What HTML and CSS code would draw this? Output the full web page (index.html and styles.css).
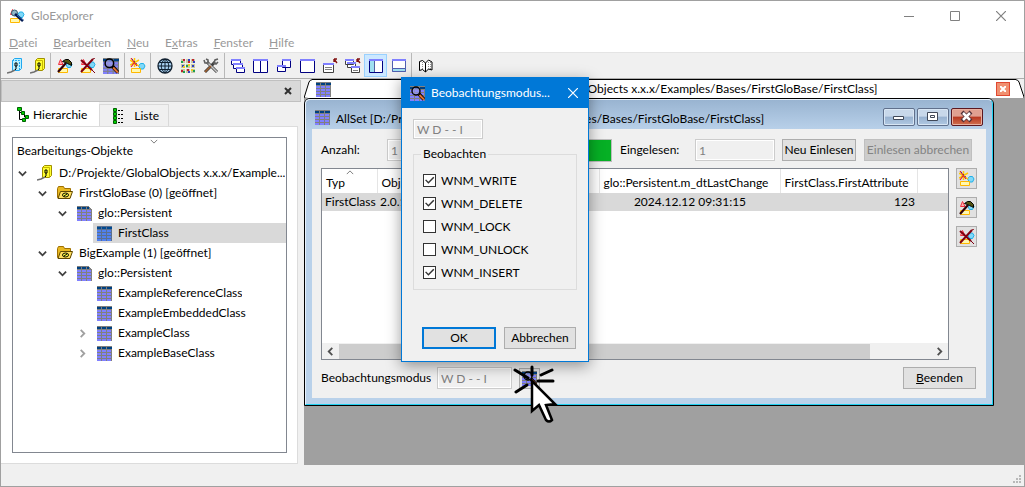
FILE: index.html
```html
<!DOCTYPE html>
<html lang="de">
<head>
    <meta charset="UTF-8">
    <meta name="viewport" content="width=device-width, initial-scale=1.0">
    <title>GloExplorer</title>
    <link rel="stylesheet" href="styles.css">
</head>
<body>
    <svg class="sprite" aria-hidden="true">
        <defs>
            <symbol id="i-grid" viewBox="0 0 15 15">
                <path fill="#808080" d="M0 0h15v15H0z"/>
                <path fill="#004080" d="M0 1h4v2H0zM5 1h4v2H5zM10 1h5v2h-5z"/>
                <path fill="#8080ff" d="M0 4h4v2H0zM5 4h4v2H5zM10 4h4v2h-4zM0 7h4v2H0zM5 7h4v2H5zM10 7h4v2h-4zM0 10h4v2H0zM5 10h4v2H5zM10 10h4v2h-4zM0 13h4v2H0zM5 13h4v2H5zM10 13h4v2h-4z"/>
            </symbol>
            <symbol id="i-gridsel" viewBox="0 0 15 15">
                <path fill="#5a7090" d="M0 0h15v15H0z"/>
                <path fill="#004a90" d="M0 1h4v2H0zM5 1h4v2H5zM10 1h5v2h-5z"/>
                <path fill="#5080f0" d="M0 4h4v2H0zM5 4h4v2H5zM10 4h4v2h-4zM0 7h4v2H0zM5 7h4v2H5zM10 7h4v2h-4zM0 10h4v2H0zM5 10h4v2H5zM10 10h4v2h-4zM0 13h4v2H0zM5 13h4v2H5zM10 13h4v2h-4z"/>
            </symbol>
            <symbol id="i-gridpage" viewBox="0 0 15 15">
                <use href="#i-grid" width="15" height="15"/>
                <path fill="#fff" d="M12 0h3v4h-1V2h-1V1h-1z"/>
                <path fill="#808080" d="M12 1h1v1h1v1h1v1h-3z"/>
            </symbol>
            <symbol id="i-watch" viewBox="0 0 15 15">
                <use href="#i-grid" width="15" height="15"/>
                <circle cx="6" cy="5" r="4" fill="#9c9cf0" fill-opacity=".6" stroke="#000" stroke-width="1.4"/>
                <path stroke="#000" stroke-width="3.4" d="M9 8l5 5.500"/>
                <path stroke="#e07030" stroke-width="2" d="M9.500 9l4.500 4.500"/>
            </symbol>
            <symbol id="i-shapes" viewBox="0 0 16 16">
                <path fill="#ffb0b0" stroke="#f03040" d="M1.500 6.500L3.500 1.500l2.500 5z"/>
                <path fill="#80d8f8" stroke="#20b0e8" d="M9 6.500L10.500 4h3L15 6.500 13.500 9.500h-3z"/>
                <path fill="#fff8b0" stroke="#ffb800" d="M1.500 10.500h9v4h-9z"/>
            </symbol>
            <symbol id="i-app" viewBox="0 0 16 16">
                <use href="#i-shapes" width="16" height="16"/>
                <circle cx="5.500" cy="5" r="3" fill="#90b8c8" stroke="#386070"/>
                <path stroke="#001850" stroke-width="2.600" d="M6 6l8 7"/>
                <path stroke="#3070c0" d="M8 7l6 5"/>
            </symbol>
            <symbol id="i-hammer" viewBox="0 0 16 16">
                <use href="#i-shapes" width="16" height="16"/>
                <path stroke="#300008" stroke-width="2.200" d="M1 14l8-9"/>
                <path fill="#505010" stroke="#000" d="M5.500 3.500l3-2h3l3 3v3l-2-1-2-1-2-1z"/>
            </symbol>
            <symbol id="i-delete" viewBox="0 0 16 16">
                <use href="#i-shapes" width="16" height="16"/>
                <path stroke="#800010" stroke-width="2" d="M1 2l11 10M13 1L1 14"/>
                <path stroke="#800010" d="M12 12l3 3M13 1l2-1"/>
            </symbol>
            <symbol id="i-new" viewBox="0 0 16 16">
                <path fill="#80d8f8" stroke="#20b0e8" d="M8.500 8L10.500 5.500h3L15 8l-1.500 3h-3z"/>
                <path fill="#fff8b0" stroke="#ffb800" d="M1.500 10.500h9v4h-9z"/>
                <path stroke="#ffc800" stroke-width="1.500" d="M4.500 0v9M0 2l9 6M0 7l9-5"/>
                <path stroke="#e02030" stroke-width="1.200" d="M1 0l6 8M1 9l3-4"/>
                <path stroke="#303080" stroke-dasharray="1 2" d="M2 1l6 6"/>
            </symbol>
            <symbol id="i-baseblue" viewBox="0 0 16 16">
                <path fill="#b8f0ff" stroke="#20a8f0" d="M5.500 2.500l2-2h7v10l-2 2h-7z"/>
                <path fill="none" stroke="#20a8f0" stroke-dasharray="2 1" d="M12.500 12V2.500h-7"/>
                <path fill="none" stroke="#000" d="M8 5h2v3H8zM9 8v3l-2 2"/>
                <path fill="none" stroke="#707070" stroke-width="1.500" d="M0 15l4-1 4-2"/>
            </symbol>
            <symbol id="i-base" viewBox="0 0 16 16">
                <path fill="#ffff30" stroke="#a09000" d="M5.500 2.500l2-2h7v10l-2 2h-7z"/>
                <path fill="none" stroke="#c8b800" d="M12.500 12V2.500h-7"/>
                <path fill="none" stroke="#000" d="M8 5h2v3H8zM9 8v3l-2 2"/>
                <path fill="none" stroke="#707070" stroke-width="1.500" d="M0 15l4-1 4-2"/>
            </symbol>
            <symbol id="i-folder" viewBox="0 0 16 16">
                <path fill="#e8b820" stroke="#a07000" d="M.5 12.500v-9l1-2h5l1 2h6v9z"/>
                <path fill="#ffe060" stroke="#604800" d="M1 13.500l2.500-7h12l-2.500 7z"/>
                <ellipse cx="8.500" cy="10" rx="3" ry="2" fill="#ffff40" stroke="#000"/>
                <path stroke="#000" d="M7 11l3-2"/>
            </symbol>
            <symbol id="i-globe" viewBox="0 0 16 16">
                <circle cx="8" cy="8" r="7" fill="#a8d0f0" stroke="#102030" stroke-width="1.300"/>
                <path fill="none" stroke="#102030" d="M1 8h14M8 1v14M2.500 4.500h11M2.500 11.500h11M8 1C3 5 3 11 8 15M8 1c5 4 5 10 0 14"/>
            </symbol>
            <symbol id="i-palette" viewBox="0 0 16 16">
                <path fill="#c8c8a0" d="M1 1h4v4H1zM6 1h4v4H6zM11 1h4v4h-4zM1 6h4v4H1zM6 6h4v4H6zM11 6h4v4h-4zM1 11h4v4H1zM6 11h4v4H6zM11 11h4v4h-4z"/>
                <path fill="#c02030" d="M3 1h2v2H3zM8 3h2v2H8zM12 1h2v2h-2zM1 12h2v2H1zM7 11h2v2H7z"/>
                <path fill="#20a050" d="M1 3h2v2H1zM6 7h2v2H6zM3 13h2v2H3zM13 12h2v2h-2z"/>
                <path fill="#3040c0" d="M8 1h2v2H8zM13 3h2v2h-2zM2 7h2v2H2zM12 7h2v2h-2zM8 13h2v2H8z"/>
                <path fill="#f0d020" d="M3 8h2v2H3zM8 6h2v2H8zM11 11h2v2h-2z"/>
            </symbol>
            <symbol id="i-tools" viewBox="0 0 16 16">
                <path stroke="#404040" stroke-width="3" d="M4 4l10 10M12 4L2 14"/>
                <path stroke="#c8c8c8" stroke-width="1.600" d="M4 4l10 10"/>
                <path stroke="#a06030" stroke-width="1.600" d="M8 8l-6 6"/>
                <path fill="none" stroke="#606060" stroke-width="1.600" d="M1 2l1 3h3V2L3 1M15 1l-3 1-1 3 2 1 2-2"/>
            </symbol>
            <symbol id="i-cascade" viewBox="0 0 16 16">
                <path fill="#fff" stroke="#000080" d="M1.500 1.500h9v5h-9zM3.500 5.500h9v5h-9zM6.500 9.500h8v5h-8z"/>
                <path fill="#8080ff" d="M1 1h10v2H1zM3 5h10v2H3zM6 9h9v2H6z"/>
            </symbol>
            <symbol id="i-tilev" viewBox="0 0 16 16">
                <path fill="#fff" stroke="#000080" d="M.5 1.500h7v13h-7zM7.500 1.500h7v13h-7z"/>
                <path fill="#8080ff" d="M0 1h15v2H0z"/>
            </symbol>
            <symbol id="i-restore" viewBox="0 0 16 16">
                <path fill="#fff" stroke="#000080" d="M6.500 1.500h8v8h-8zM1.500 7.500h8v6h-8z"/>
                <path fill="#8080ff" d="M6 1h9v2H6zM1 7h9v2H1z"/>
            </symbol>
            <symbol id="i-window" viewBox="0 0 16 16">
                <path fill="#fff" stroke="#000080" d="M1.500 1.500h14v13h-14z"/>
                <path fill="#8080ff" d="M1 1h15v2H1z"/>
            </symbol>
            <symbol id="i-detach" viewBox="0 0 16 16">
                <path fill="#fff" stroke="#404040" d="M1.500 5.500h10v9h-10z"/>
                <path fill="#8080ff" d="M1 5h11v2H1z"/>
                <path stroke="#808080" d="M3 9.500h7M3 11.500h7"/>
                <path fill="none" stroke="#801010" stroke-width="1.400" d="M12 1h3M12 1v3M12 1l3 4"/>
            </symbol>
            <symbol id="i-detachall" viewBox="0 0 16 16">
                <path fill="#fff" stroke="#404040" d="M.5 1.500h8v5h-8zM2.500 4.500h8v5h-8zM6.500 8.500h8v6h-8z"/>
                <path fill="#8080ff" d="M0 1h9v2H0zM2 4h9v2H2zM6 8h9v2H6z"/>
                <path stroke="#808080" d="M8 12.500h5"/>
                <path fill="none" stroke="#801010" stroke-width="1.400" d="M12 1h3M12 1v3M12 1l3 4"/>
            </symbol>
            <symbol id="i-dockleft" viewBox="0 0 16 16">
                <path fill="#fff" stroke="#000080" d="M1.500 1.500h13v13h-13z"/>
                <path fill="#8080ff" d="M1 1h14v2H1z"/>
                <path fill="#a0e0f0" d="M2 3h4v11H2z"/>
                <path stroke="#5060a0" d="M6.500 3v11"/>
            </symbol>
            <symbol id="i-dockbottom" viewBox="0 0 16 16">
                <path fill="#fff" stroke="#5060b0" d="M1.500 1.500h13v12h-13z"/>
                <path fill="#8080ff" d="M1 1h14v2H1z"/>
                <path fill="#a0e0f0" stroke="#5060b0" d="M1.500 10.500h13v3h-13z"/>
            </symbol>
            <symbol id="i-book" viewBox="0 0 16 16">
                <path fill="#fff" stroke="#000" d="M1.500 3.500l3-1 3 2.500 3-3 3.500 2v8l-3.500-1-3 3-3-2.500-3 1zM7.500 5v9"/>
                <path stroke="#909090" stroke-dasharray="1 1" d="M4.500 4v7M10.500 4v7M12.500 4v7"/>
            </symbol>
            <symbol id="i-tree" viewBox="0 0 16 16">
                <path fill="none" stroke="#000" d="M2.500 3v9.500H8M2.500 5.500H6M7.500 6v4H11"/>
                <path fill="#00d000" stroke="#006000" d="M.5.500h4v3h-4zM4.500 4.500h3v3h-3zM8.500 8.500h3v3h-3zM5.500 11.500h3v3h-3z"/>
            </symbol>
            <symbol id="i-list" viewBox="0 0 16 16">
                <path fill="#00d000" stroke="#006000" d="M1.500.5h3v3h-3zM1.500 4.500h3v3h-3zM1.500 8.500h3v3h-3zM1.500 12.500h3v3h-3z"/>
                <path stroke="#000" stroke-dasharray="2 1" d="M6 2.500h6M6 6.500h6M6 10.500h6M6 14.500h6"/>
            </symbol>
            <symbol id="i-down" viewBox="0 0 10 10">
                <path fill="none" stroke="#404040" stroke-width="2" d="M1 3l4 4 4-4"/>
            </symbol>
            <symbol id="i-right" viewBox="0 0 10 10">
                <path fill="none" stroke="#a0a0a0" stroke-width="2" d="M3 1l4 4-4 4"/>
            </symbol>
            <symbol id="i-sort" viewBox="0 0 10 6">
                <path fill="none" stroke="#606060" d="M1 1l4 4 4-4"/>
            </symbol>
            <symbol id="i-close" viewBox="0 0 10 10">
                <path fill="none" stroke="currentColor" stroke-width="1.200" d="M0 0l10 10M10 0L0 10"/>
            </symbol>
        </defs>
    </svg>

    <header class="titlebar">
        <svg class="icon"><use href="#i-app"/></svg>
        <h1>GloExplorer</h1>
        <div class="window-buttons">
            <button type="button" aria-label="Minimieren"><svg viewBox="0 0 10 10"><path stroke="#808080" d="M0 5.500h10"/></svg></button>
            <button type="button" aria-label="Maximieren"><svg viewBox="0 0 10 10"><path fill="none" stroke="#808080" d="M.5.500h9v9h-9z"/></svg></button>
            <button type="button" aria-label="Schließen"><svg><use href="#i-close"/></svg></button>
        </div>
    </header>

    <nav class="menubar">
        <a href="#"><u>D</u>atei</a>
        <a href="#"><u>B</u>earbeiten</a>
        <a href="#"><u>N</u>eu</a>
        <a href="#">E<u>x</u>tras</a>
        <a href="#"><u>F</u>enster</a>
        <a href="#"><u>H</u>ilfe</a>
    </nav>

    <div class="toolbar">
        <div class="tool-group">
            <button type="button" aria-label="Basis verbinden"><svg class="icon"><use href="#i-baseblue"/></svg></button>
            <button type="button" aria-label="Basis öffnen"><svg class="icon"><use href="#i-base"/></svg></button>
        </div>
        <div class="tool-group">
            <button type="button" aria-label="Bearbeiten"><svg class="icon"><use href="#i-hammer"/></svg></button>
            <button type="button" aria-label="Löschen"><svg class="icon"><use href="#i-delete"/></svg></button>
            <button type="button" aria-label="Beobachten"><svg class="icon"><use href="#i-watch"/></svg></button>
        </div>
        <div class="tool-group tight">
            <button type="button" aria-label="Neu"><svg class="icon"><use href="#i-new"/></svg></button>
        </div>
        <div class="tool-group">
            <button type="button" aria-label="Sprache"><svg class="icon"><use href="#i-globe"/></svg></button>
            <button type="button" aria-label="Farben"><svg class="icon"><use href="#i-palette"/></svg></button>
            <button type="button" aria-label="Einstellungen"><svg class="icon"><use href="#i-tools"/></svg></button>
        </div>
        <div class="tool-group tight">
            <button type="button" aria-label="Überlappend"><svg class="icon"><use href="#i-cascade"/></svg></button>
            <button type="button" aria-label="Nebeneinander"><svg class="icon"><use href="#i-tilev"/></svg></button>
            <button type="button" aria-label="Wiederherstellen"><svg class="icon"><use href="#i-restore"/></svg></button>
            <button type="button" aria-label="Maximieren"><svg class="icon"><use href="#i-window"/></svg></button>
            <button type="button" aria-label="Ablösen"><svg class="icon"><use href="#i-detach"/></svg></button>
            <button type="button" aria-label="Alle ablösen"><svg class="icon"><use href="#i-detachall"/></svg></button>
            <button type="button" class="pressed" aria-label="Seitenleiste"><svg class="icon"><use href="#i-dockleft"/></svg></button>
            <button type="button" aria-label="Ausgabe"><svg class="icon"><use href="#i-dockbottom"/></svg></button>
        </div>
        <div class="tool-group">
            <button type="button" aria-label="Handbuch"><svg class="icon"><use href="#i-book"/></svg></button>
        </div>
    </div>

    <main class="workspace">
        <aside class="dock">
            <div class="dock-title">
                <button type="button" aria-label="Schließen"><svg viewBox="0 0 8 8"><path stroke="#303030" stroke-width="2" d="M1 1l6 6M7 1L1 7"/></svg></button>
            </div>
            <div class="tabs">
                <button type="button" class="tab active"><svg class="icon"><use href="#i-tree"/></svg>Hierarchie</button>
                <button type="button" class="tab"><svg class="icon"><use href="#i-list"/></svg>Liste</button>
            </div>
            <div class="tab-page">
                <div class="tree">
                    <div class="tree-header"><svg class="sort"><use href="#i-sort"/></svg>Bearbeitungs-Objekte</div>
                    <ul>
                        <li class="level-1"><svg class="arrow"><use href="#i-down"/></svg><svg class="icon"><use href="#i-base"/></svg><span>D:/Projekte/GlobalObjects x.x.x/Example...</span></li>
                        <li class="level-2"><svg class="arrow"><use href="#i-down"/></svg><svg class="icon"><use href="#i-folder"/></svg><span>FirstGloBase (0) [geöffnet]</span></li>
                        <li class="level-3"><svg class="arrow"><use href="#i-down"/></svg><svg class="icon cls"><use href="#i-gridpage"/></svg><span>glo::Persistent</span></li>
                        <li class="level-4 selected"><svg class="arrow"></svg><svg class="icon cls"><use href="#i-gridsel"/></svg><span>FirstClass</span></li>
                        <li class="level-2"><svg class="arrow"><use href="#i-down"/></svg><svg class="icon"><use href="#i-folder"/></svg><span>BigExample (1) [geöffnet]</span></li>
                        <li class="level-3"><svg class="arrow"><use href="#i-down"/></svg><svg class="icon cls"><use href="#i-gridpage"/></svg><span>glo::Persistent</span></li>
                        <li class="level-4"><svg class="arrow"></svg><svg class="icon cls"><use href="#i-grid"/></svg><span>ExampleReferenceClass</span></li>
                        <li class="level-4"><svg class="arrow"></svg><svg class="icon cls"><use href="#i-grid"/></svg><span>ExampleEmbeddedClass</span></li>
                        <li class="level-4"><svg class="arrow"><use href="#i-right"/></svg><svg class="icon cls"><use href="#i-grid"/></svg><span>ExampleClass</span></li>
                        <li class="level-4"><svg class="arrow"><use href="#i-right"/></svg><svg class="icon cls"><use href="#i-grid"/></svg><span>ExampleBaseClass</span></li>
                    </ul>
                </div>
            </div>
        </aside>

        <section class="mdi">
            <div class="mdi-tab">
                <svg class="slant" viewBox="0 0 8 19"><path fill="#fff" stroke="#000" d="M0 19L5 3Q6 .5 9 .5V20z"/></svg>
                <div class="mdi-tab-body">
                    <svg class="icon cls"><use href="#i-grid"/></svg>
                    <span>AllSet [D:/Projekte/GlobalObjects x.x.x/Examples/Bases/FirstGloBase/FirstClass]</span>
                    <button type="button" aria-label="Schließen"><svg viewBox="0 0 6 6"><path stroke="#fff" stroke-width="2" d="M0 0l6 6M6 0L0 6"/></svg></button>
                </div>
                <svg class="slant" viewBox="0 0 8 19"><path fill="#f0f0f0" d="M0 0h8v19H8z"/><path fill="#fff" stroke="#000" d="M-1 .5Q2 .5 3 3L8 18v3h-9z"/></svg>
            </div>

            <article class="subwindow">
                <div class="sub-frame">
                    <header class="sub-title">
                        <svg class="icon cls"><use href="#i-grid"/></svg>
                        <h2>AllSet [D:/Projekte/GlobalObjects x.x.x/Examples/Bases/FirstGloBase/FirstClass]</h2>
                        <button type="button" aria-label="Minimieren"><svg viewBox="0 0 30 16"><path fill="#fff" stroke="#404858" d="M9.500 7.500h10v3h-10z"/></svg></button>
                        <button type="button" aria-label="Maximieren"><svg viewBox="0 0 30 16"><path fill="#fff" stroke="#404858" d="M9.500 3.500h10v8h-10z"/><path fill="none" stroke="#404858" d="M12.500 6.500h4v2h-4z"/></svg></button>
                        <button type="button" class="close" aria-label="Schließen"><svg viewBox="0 0 30 16"><path stroke="#503038" stroke-width="4" d="M10 3l9 9M19 3l-9 9"/><path stroke="#fff" stroke-width="2.500" d="M11 4l7 7M18 4l-7 7"/></svg></button>
                    </header>
                    <div class="client">
                        <div class="query">
                            <label for="count">Anzahl:</label>
                            <input type="text" id="count" class="count" value="1" disabled>
                            <div class="progress"></div>
                            <label for="read">Eingelesen:</label>
                            <input type="text" id="read" class="read" value="1" disabled>
                            <button type="button" class="btn">Neu Einlesen</button>
                            <button type="button" class="btn wide" disabled>Einlesen abbrechen</button>
                        </div>
                        <div class="result">
                            <div class="grid">
                                <table>
                                    <colgroup>
                                        <col class="c-type"><col class="c-id"><col class="c-date"><col class="c-attr"><col>
                                    </colgroup>
                                    <thead>
                                        <tr>
                                            <th><svg class="sort up"><use href="#i-sort"/></svg>Typ</th>
                                            <th>ObjId</th>
                                            <th>glo::Persistent.m_dtLastChange</th>
                                            <th>FirstClass.FirstAttribute</th>
                                            <th></th>
                                        </tr>
                                    </thead>
                                    <tbody>
                                        <tr>
                                            <td>FirstClass</td>
                                            <td>2.0.1</td>
                                            <td class="center">2024.12.12 09:31:15</td>
                                            <td class="right">123</td>
                                            <td></td>
                                        </tr>
                                    </tbody>
                                </table>
                                <div class="scrollbar">
                                    <svg viewBox="0 0 10 10"><path fill="none" stroke="#505050" stroke-width="2" d="M7 1L3 5l4 4"/></svg>
                                    <div class="thumb"></div>
                                    <svg viewBox="0 0 10 10"><path fill="none" stroke="#505050" stroke-width="2" d="M3 1l4 4-4 4"/></svg>
                                </div>
                            </div>
                            <div class="side">
                                <button type="button" class="btn square" aria-label="Neu"><svg class="icon"><use href="#i-new"/></svg></button>
                                <button type="button" class="btn square" aria-label="Bearbeiten"><svg class="icon"><use href="#i-hammer"/></svg></button>
                                <button type="button" class="btn square" aria-label="Löschen"><svg class="icon"><use href="#i-delete"/></svg></button>
                            </div>
                        </div>
                        <div class="footer">
                            <label for="mode">Beobachtungsmodus:</label>
                            <input type="text" id="mode" class="mode" value="W D - - I" disabled>
                            <div class="click-spot">
                                <button type="button" class="btn square" aria-label="Beobachtungsmodus"><svg class="icon cls"><use href="#i-watch"/></svg></button>
                                <svg class="pointer" viewBox="0 0 46 60">
                                    <path fill="none" stroke="#000" stroke-width="3" stroke-linecap="round" d="M2 5l13 8M3 27l11-7M19 2v8M28 10l11-5M25 16h15"/>
                                    <path fill="#fff" stroke="#000" stroke-width="2.500" d="M19 16v30l7-6 7 15q3 3 6 0l-6-15 9-1z"/>
                                </svg>
                            </div>
                            <button type="button" class="btn quit"><u>B</u>eenden</button>
                        </div>
                    </div>
                </div>
            </article>
        </section>
    </main>

    <footer class="statusbar">
        <svg viewBox="0 0 8 8"><path fill="#b8b8b8" d="M6 0h2v2H6zM3 3h2v2H3zM6 3h2v2H6zM0 6h2v2H0zM3 6h2v2H3zM6 6h2v2H6z"/></svg>
    </footer>

    <form class="dialog" role="dialog" aria-labelledby="dialogTitle">
        <div class="dialog-title">
            <svg class="icon cls"><use href="#i-watch"/></svg>
            <h2 id="dialogTitle">Beobachtungsmodus...</h2>
            <button type="button" aria-label="Schließen"><svg><use href="#i-close"/></svg></button>
        </div>
        <div class="dialog-body">
            <input type="text" class="flags" aria-label="Modus" value="W D - - I" disabled>
            <fieldset>
                <legend>Beobachten</legend>
                <label><input type="checkbox" checked>WNM_WRITE</label>
                <label><input type="checkbox" checked>WNM_DELETE</label>
                <label><input type="checkbox">WNM_LOCK</label>
                <label><input type="checkbox">WNM_UNLOCK</label>
                <label><input type="checkbox" checked>WNM_INSERT</label>
            </fieldset>
            <div class="dialog-buttons">
                <button type="button" class="btn default">OK</button>
                <button type="button" class="btn">Abbrechen</button>
            </div>
        </div>
    </form>
</body>
</html>
```
FILE: styles.css
```css
:root {
    --face: #f0f0f0;
    --line: #adadad;
    --box: #828790;
    --accent: #0078d7;
    --muted: #808080;
}

* {
    margin: 0;
    padding: 0;
    box-sizing: border-box;
}

body {
    display: flex;
    flex-direction: column;
    min-height: 100vh;
    border: 1px solid #a0a0a0;
    background: var(--face);
    color: #000;
    font: 12px/16px "Segoe UI", Lato, sans-serif;
}

button,
input {
    font: inherit;
    color: inherit;
}

button {
    border: none;
    background: none;
}

h1,
h2 {
    font-size: 12px;
    font-weight: normal;
    white-space: nowrap;
}

svg {
    display: block;
    flex: none;
}

.sprite {
    position: absolute;
    width: 0;
    height: 0;
}

.icon {
    width: 16px;
    height: 16px;
}

.icon.cls {
    width: 15px;
    height: 15px;
}

/* main window */
.titlebar {
    display: flex;
    align-items: center;
    height: 30px;
    padding-left: 8px;
    background: #fff;
}

.titlebar h1 {
    flex: 1;
    padding-left: 6px;
    color: #999;
}

.window-buttons {
    display: flex;
    color: #808080;
}

.window-buttons button {
    display: grid;
    place-items: center;
    width: 46px;
    height: 28px;
}

.window-buttons svg {
    width: 10px;
    height: 10px;
}

.menubar {
    display: flex;
    gap: 16px;
    height: 22px;
    padding: 4px 8px;
    border-bottom: 1px solid #e4e4e4;
    background: #fff;
}

.menubar a {
    color: #999;
    text-decoration: none;
}

.toolbar {
    display: flex;
    height: 26px;
    border-bottom: 1px solid var(--line);
}

.tool-group {
    display: flex;
    align-items: center;
    padding: 0 2px;
    border-right: 1px solid #b8b8b8;
}

.tool-group.tight {
    padding: 0 1px;
}

.tool-group:first-child {
    padding-right: 1px;
}

.tool-group:last-child {
    border-right: none;
}

.toolbar button {
    display: grid;
    place-items: center;
    width: 23px;
    height: 23px;
}

.toolbar .pressed {
    border: 1px solid #99d1ff;
    background: #cce8ff;
}

.workspace {
    display: flex;
    flex: 1;
}

/* left dock */
.dock {
    display: flex;
    flex-direction: column;
    width: 303px;
    padding: 1px 6px 1px 0;
}

.dock-title {
    display: flex;
    align-items: center;
    justify-content: flex-end;
    height: 22px;
    margin-right: -3px;
    padding-right: 8px;
    border: 1px solid #c0c0c0;
    background: #d9d9d9;
}

.dock-title svg {
    width: 8px;
    height: 8px;
}

.tabs {
    display: flex;
    align-items: flex-end;
    height: 24px;
}

.tab {
    display: flex;
    align-items: center;
    gap: 6px;
    height: 22px;
    padding: 1px 9px 0 12px;
    border: 1px solid #d9d9d9;
    border-bottom: none;
}

.tab.active {
    gap: 0;
    height: 24px;
    padding: 2px 12px 0 16px;
    border: none;
    background: #fff;
}

.tab-page {
    display: flex;
    flex: 1;
    padding: 10px 10px 10px 11px;
    border: 1px solid #dcdcdc;
    border-left: none;
    background: #fff;
}

.tree {
    flex: 1;
    min-width: 0;
    border: 1px solid var(--box);
}

.tree-header {
    position: relative;
    height: 25px;
    padding: 5px 4px;
}

.sort {
    position: absolute;
    top: 1px;
    left: 50%;
    width: 8px;
    height: 5px;
}

.sort.up {
    left: 24px;
    transform: rotate(180deg);
}

.tree ul {
    list-style: none;
}

.tree li {
    display: flex;
    align-items: center;
    height: 20px;
}

.tree li span {
    overflow: hidden;
    margin-left: 6px;
    white-space: nowrap;
    text-overflow: ellipsis;
}

.arrow {
    width: 9px;
    height: 9px;
    margin-right: 10px;
}

.level-1 {
    padding-left: 5px;
}

.level-2 {
    padding-left: 25px;
}

.level-3 {
    padding-left: 45px;
}

.level-4 {
    padding-left: 65px;
}

.tree .selected {
    background: linear-gradient(to right, #fff 80px, #d9d9d9 80px);
}

/* document area */
.mdi {
    flex: 1;
    min-width: 0;
    background: #a0a0a0;
}

.mdi-tab {
    display: flex;
    height: 19px;
    background: var(--face);
}

.slant {
    width: 8px;
    height: 19px;
}

.mdi-tab-body {
    display: flex;
    flex: 1;
    align-items: center;
    padding: 0 6px 0 4px;
    border-top: 1px solid #000;
    background: #fff;
}

.mdi-tab-body span {
    flex: 1;
    text-align: center;
    white-space: nowrap;
}

.mdi-tab-body button {
    display: grid;
    place-items: center;
    width: 14px;
    height: 14px;
    border: 1px solid #e04830;
    background: #f09070;
}

.mdi-tab-body svg:not(.icon) {
    width: 6px;
    height: 6px;
}

.subwindow {
    width: calc(100% - 30px);
    border: 1px solid #000;
    border-radius: 6px 6px 0 0;
    background: #b9d1ea;
}

.sub-frame {
    padding: 0 6px 6px;
    border: 1px solid #e8f2fc;
    border-right-color: #20d0f0;
    border-bottom-color: #20d0f0;
    border-radius: 5px 5px 0 0;
    background: linear-gradient(#99b4d1, #b9d1ea 30px);
}

.sub-title {
    display: flex;
    align-items: center;
    gap: 2px;
    height: 29px;
    padding: 5px 3px 0;
}

.sub-title h2 {
    flex: 1;
    padding: 4px 0 0 4px;
}

.sub-title button {
    width: 32px;
    height: 18px;
    border: 1px solid #60708c;
    border-radius: 2px;
    background: linear-gradient(#c8d8ea 45%, #98b2d0 50%, #b0c8e2);
    box-shadow: inset 0 0 0 1px #d8e6f4;
}

.sub-title button svg {
    width: 30px;
    height: 16px;
}

.sub-title .close {
    border-color: #5c1820;
    background: linear-gradient(#e0a090 45%, #b83820 50%, #d07050);
    box-shadow: inset 0 0 0 1px #e8b0a0;
}

.client {
    padding: 10px 9px 9px;
    background: var(--face);
}

.query {
    display: flex;
    align-items: center;
    height: 22px;
}

input[type="text"] {
    min-width: 0;
    height: 22px;
    padding: 0 3px;
    border: 1px solid #cccccc;
    outline: 1px solid #fff;
    outline-offset: -2px;
    border-radius: 0;
    background: var(--face);
    color: var(--muted);
}

.count {
    width: 80px;
    margin: 0 7px 0 8px;
}

.query label {
    width: 58px;
}

.progress {
    flex: 1;
    height: 23px;
    border: 1px solid #bcbcbc;
    background: #06b025;
}

.progress + label {
    width: 75px;
    margin-left: 8px;
}

.read {
    width: 80px;
}

.btn {
    height: 22px;
    border: 1px solid var(--line);
    background: #e1e1e1;
    text-align: center;
    white-space: nowrap;
}

.query .btn {
    width: 74px;
    margin-left: 7px;
}

.query .wide {
    width: 108px;
    margin: 0 5px 0 8px;
}

.btn:disabled {
    border-color: #bfbfbf;
    background: #cccccc;
    color: #838383;
}

.result {
    display: flex;
    gap: 7px;
    margin-top: 7px;
}

.grid {
    display: flex;
    flex: 1;
    flex-direction: column;
    justify-content: space-between;
    min-width: 0;
    min-height: 192px;
    border: 1px solid var(--box);
    background: #fff;
}

table {
    width: 100%;
    border-collapse: collapse;
    table-layout: fixed;
    white-space: nowrap;
}

.c-type {
    width: 55px;
}

.c-id {
    width: 222px;
}

.c-date {
    width: 181px;
}

.c-attr {
    width: 137px;
}

th {
    position: relative;
    height: 24px;
    padding: 3px 4px 0;
    border-right: 1px solid #e5e5e5;
    font-weight: normal;
    text-align: left;
}

th:last-child {
    border-right: none;
}

td {
    height: 18px;
    padding: 0 2px 0 3px;
    background: #d9d9d9;
}

.center {
    text-align: center;
}

.right {
    text-align: right;
}

.scrollbar {
    display: flex;
    align-items: center;
    height: 16px;
    background: var(--face);
}

.scrollbar svg {
    width: 9px;
    height: 9px;
    margin: 0 4px;
}

.thumb {
    flex: 1;
    height: 15px;
    margin-right: 61px;
    background: #cdcdcd;
}

.side {
    display: flex;
    flex-direction: column;
    gap: 8px;
}

.square {
    display: grid;
    place-items: center;
    width: 21px;
    height: 21px;
}

.footer {
    display: flex;
    align-items: center;
    margin-top: 7px;
}

.footer label {
    overflow: hidden;
    width: 110px;
    white-space: nowrap;
}

.mode {
    width: 75px;
    margin: 0 7px 0 6px;
}

.click-spot {
    position: relative;
    flex: 1;
}

.pointer {
    position: absolute;
    top: -3px;
    left: -6px;
    z-index: 1;
    width: 46px;
    height: 60px;
}

.quit {
    width: 73px;
    margin-right: 1px;
}

.statusbar {
    display: flex;
    align-items: flex-end;
    justify-content: flex-end;
    height: 21px;
    padding: 3px;
}

.statusbar svg {
    width: 8px;
    height: 8px;
}

/* dialog */
.dialog {
    position: absolute;
    top: 77px;
    left: 401px;
    z-index: 2;
    width: 188px;
    border: 1px solid var(--accent);
    background: var(--face);
    box-shadow: 0 4px 14px rgba(0, 0, 0, 0.4);
}

.dialog-title {
    display: flex;
    align-items: center;
    height: 30px;
    padding: 0 10px 0 8px;
    background: var(--accent);
    color: #fff;
}

.dialog-title h2 {
    flex: 1;
    padding-left: 6px;
}

.dialog-title button,
.dialog-title button svg {
    width: 10px;
    height: 10px;
}

.dialog-body {
    padding: 11px 11px 12px;
}

.dialog .flags {
    display: block;
    width: 70px;
    height: 20px;
}

fieldset {
    height: 144px;
    margin-top: 7px;
    padding: 7px 9px;
    border: 1px solid #dcdcdc;
}

legend {
    margin-left: -2px;
    padding: 0 2px;
}

fieldset label {
    display: flex;
    align-items: center;
    gap: 5px;
    height: 23px;
}

input[type="checkbox"] {
    appearance: none;
    width: 13px;
    height: 13px;
    border: 1px solid #333;
    background: #fff;
}

input[type="checkbox"]:checked::before {
    content: "";
    display: block;
    height: 11px;
    background: #333;
    clip-path: polygon(10% 48%, 19% 40%, 40% 62%, 84% 16%, 94% 25%, 40% 80%);
}

.dialog-buttons {
    display: flex;
    gap: 8px;
    margin: 37px 1px 0 9px;
}

.dialog-buttons .btn {
    flex: 1;
}

.default {
    border: 2px solid var(--accent);
}
```
